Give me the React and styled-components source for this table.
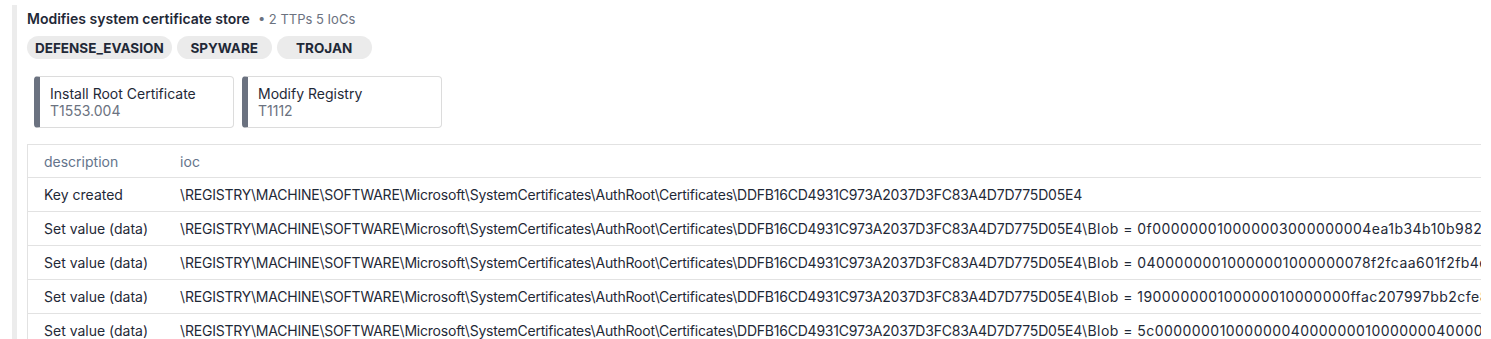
import styled, { createGlobalStyle } from 'styled-components';

const GlobalStyle = createGlobalStyle`
  body {
    margin: 0;
    background: #fff;
    font-family: Inter, "Noto Sans", sans-serif;
    color: #1f2937;
  }
`;

const Page = styled.div`
  padding: 5px 10px 0 12px;
`;

const Section = styled.section`
  border-left: 5px solid #ececec;
  padding: 4px 0 0 10px;
  min-height: 334px;
`;

const TitleRow = styled.div`
  display: flex;
  align-items: baseline;
  gap: 8px;
  line-height: 20px;
`;

const Title = styled.span`
  font-size: 14px;
  font-weight: 600;
  color: #1f2937;
`;

const Meta = styled.span`
  font-size: 13px;
  color: #6b7280;
`;

const Tags = styled.div`
  display: flex;
  gap: 5px;
  margin-top: 7px;
`;

const Tag = styled.span`
  display: inline-flex;
  align-items: center;
  justify-content: center;
  height: 23px;
  min-width: 95px;
  padding: 0 8px;
  box-sizing: border-box;
  border-radius: 12px;
  background: #ebebeb;
  font-size: 13.5px;
  font-weight: 700;
  color: #1f2937;
`;

const Cards = styled.div`
  display: flex;
  gap: 8px;
  margin: 17px 0 0 7px;
`;

const Card = styled.div`
  width: 200px;
  height: 52px;
  box-sizing: border-box;
  border: 1px solid #dcdcdc;
  border-left: 6px solid #6b7280;
  border-radius: 4px;
  padding: 8px 10px;
  font-size: 14px;
  line-height: 17px;
`;

const CardName = styled.div`
  color: #1f2937;
`;

const CardId = styled.div`
  color: #6b7280;
`;

const TableWrap = styled.div`
  margin-top: 16px;
  overflow: hidden;
  border-left: 1px solid #e2e2e2;
`;

const Table = styled.table`
  border-collapse: collapse;
  width: 100%;
  font-size: 14px;
  white-space: nowrap;
`;

const Th = styled.th`
  text-align: left;
  font-weight: 400;
  color: #64748b;
  height: 32px;
  padding: 0 16px;
  border-top: 1px solid #e2e2e2;
  border-bottom: 1px solid #e2e2e2;
  width: ${(p) => (p.$first ? '104px' : 'auto')};
`;

const Td = styled.td`
  height: 33px;
  padding: 0 16px;
  color: #1f2937;
  border-bottom: 1px solid #e2e2e2;
`;

// registry path renders a touch tighter, the hex value a touch looser
const KeyPath = styled.span`
  letter-spacing: -0.22px;
`;

const Value = styled.span`
  letter-spacing: 0.45px;
`;

const base =
  '\\REGISTRY\\MACHINE\\SOFTWARE\\Microsoft\\SystemCertificates\\AuthRoot\\Certificates\\DDFB16CD4931C973A2037D3FC83A4D7D775D05E4';

const rows = [
  ['Key created', ''],
  ['Set value (data)', '\\Blob = 0f000000010000003000000004ea1b34b10b982a96a3c0b5d3a8e1f7c2b0d4e9a'],
  ['Set value (data)', '\\Blob = 04000000010000001000000078f2fcaa601f2fb4ebc937ba532e75499d6f0b2c'],
  ['Set value (data)', '\\Blob = 190000000100000010000000ffac207997bb2cfe8a2b5b37e0a1c53d4f7e0d1a'],
  ['Set value (data)', '\\Blob = 5c0000000100000004000000010000000400000003000000a4b6b3996fc2f306b3fd'],
];

const ttps = [
  { name: 'Install Root Certificate', id: 'T1553.004' },
  { name: 'Modify Registry', id: 'T1112' },
];

export default function App() {
  return (
    <Page>
      <GlobalStyle />
      <Section>
        <TitleRow>
          <Title>Modifies system certificate store</Title>
          <Meta>• 2 TTPs 5 IoCs</Meta>
        </TitleRow>
        <Tags>
          {['DEFENSE_EVASION', 'SPYWARE', 'TROJAN'].map((t) => (
            <Tag key={t}>{t}</Tag>
          ))}
        </Tags>
        <Cards>
          {ttps.map((t) => (
            <Card key={t.id}>
              <CardName>{t.name}</CardName>
              <CardId>{t.id}</CardId>
            </Card>
          ))}
        </Cards>
        <TableWrap>
          <Table>
            <thead>
              <tr>
                <Th $first>description</Th>
                <Th>ioc</Th>
              </tr>
            </thead>
            <tbody>
              {rows.map((r, i) => (
                <tr key={i}>
                  <Td>{r[0]}</Td>
                  <Td>
                    <KeyPath>{base}</KeyPath>
                    {r[1] && <Value>{r[1]}</Value>}
                  </Td>
                </tr>
              ))}
            </tbody>
          </Table>
        </TableWrap>
      </Section>
    </Page>
  );
}
